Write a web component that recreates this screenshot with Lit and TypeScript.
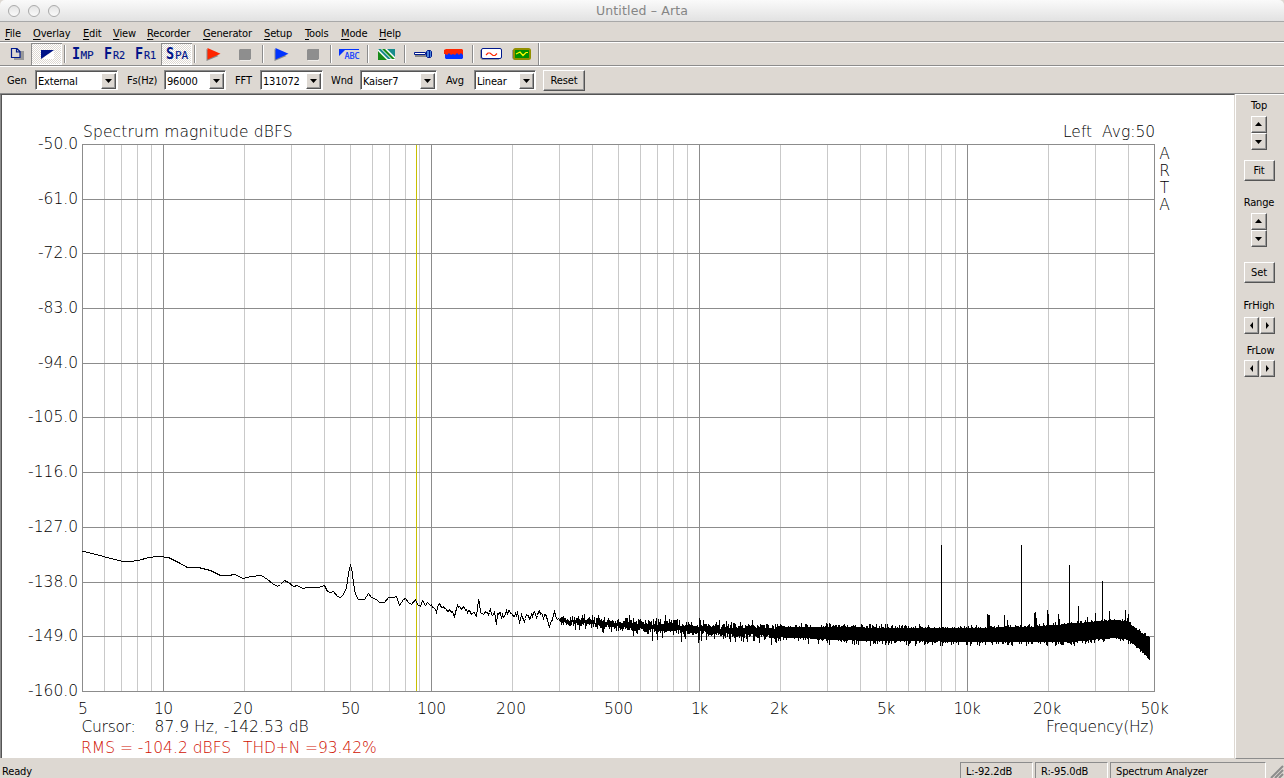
import { LitElement, html, svg, css } from "lit";
import { customElement, property } from "lit/decorators.js";

const UI_FONT = css`"DejaVu Sans Condensed", "DejaVu Sans", sans-serif`;

const bevel = css`
  .raised {
    box-sizing: border-box;
    background: #ddd8d2;
    border: 1px solid;
    border-color: #fff #555 #555 #fff;
    box-shadow: inset -1px -1px 0 #999;
    display: flex;
    align-items: center;
    justify-content: center;
  }
`;

/* ---------- Spectrum chart ---------- */

const LEFT = 82.5, RIGHT = 1154.5, TOP = 144.5, BOTTOM = 691.5;

const fx = (f: number) => Math.round(163 + 268 * Math.log10(f / 10)) + 0.5;

const minorFreqs: number[] = [];
for (const d of [1, 10, 100, 1000, 10000]) {
  for (let k = 2; k < 10; k++) {
    const f = k * d;
    if (f > 5 && f < 50000) minorFreqs.push(f);
  }
}
const majorFreqs = [10, 100, 1000, 10000];

const yTicks: [string, number][] = [
  ["-50.0", 144.5], ["-61.0", 199.5], ["-72.0", 253.5], ["-83.0", 308.5],
  ["-94.0", 363.5], ["-105.0", 417.5], ["-116.0", 472.5], ["-127.0", 527.5],
  ["-138.0", 582.5], ["-149.0", 636.5], ["-160.0", 691.5],
];

const xTicks: [string, number, number][] = [
  ["5", 82.5, 9], ["10", 163.5, 19], ["20", 243, 20], ["50", 350.5, 19],
  ["100", 431.5, 29], ["200", 511, 30], ["500", 618.5, 29], ["1k", 699.5, 17],
  ["2k", 779, 18], ["5k", 886, 18], ["10k", 967, 27], ["20k", 1047, 28], ["50k", 1154.5, 28],
];

const baseTrace: [number, number][] = (
  "82,551 88,552 103,556 114,559 123,561 130,561 138,560 148,557 158,556 168,557 178,562 187,567 " +
  "198,567 210,570 220,575 228,575 234,574 243,578 250,576 261,575 267,579 272,583 277,586 280,584 " +
  "284,580 288,582 293,586 297,585 302,588 307,587 318,587 324,585 327,591 330,592 333,591 337,596 340,597 " +
  "343,594 346,587 348,573 350,564 352,573 353,583 355,594 358,599 364,599 368,593 371,597 376,599 " +
  "379,602 384,602 388,597 393,597 396,596 399,605 403,599 405,598 408,602 411,604 415,599 417,604 " +
  "420,606 422,600 425,605 427,602 430,605 434,608 436,612 438,604 440,605 444,608 447,611 449,609 " +
  "452,611 454,616 457,605 461,609 464,607 467,612 469,610 471,614 474,612 476,616 478,600 479,602 " +
  "480,612 482,613 486,612 488,614 490,608 492,615 494,611 496,624 497,613 499,612 501,618 505,613 " +
  "508,610 511,613 514,616 517,612 519,622 521,614 524,621 527,615 530,618 533,612 536,617 538,611 " +
  "541,613 543,619 545,614 549,627 551,621 554,611 557,619 560,621"
).split(" ").map((p) => p.split(",").map(Number) as [number, number]);

function random(seed: number) {
  return () => {
    seed = (seed * 1664525 + 1013904223) >>> 0;
    return seed / 4294967296;
  };
}

function buildTrace(): string {
  const rnd = random(4711);
  const out: string[] = [];
  for (let i = 0; i < baseTrace.length; i++) {
    const [x, y] = baseTrace[i];
    out.push(`${x},${y}`);
    const next = baseTrace[i + 1];
    if (!next || x < 430) continue;
    const amp = x < 490 ? 3 : 6;
    for (let k = x + 1; k < next[0]; k++) {
      const mid = y + ((next[1] - y) * (k - x)) / (next[0] - x);
      out.push(`${k},${Math.round(mid + (rnd() - 0.5) * amp)}`);
    }
  }
  return out.join(" ");
}
const tracePoints = buildTrace();

// x, top, bottom, outward jitter
const envelope: [number, number, number, number][] = [
  [560, 619, 622, 4], [600, 621, 625, 5], [640, 623, 629, 5], [660, 624, 630, 6],
  [700, 626, 632, 6], [730, 627, 634, 6], [770, 627, 636, 5], [800, 627, 637, 4],
  [840, 627, 639, 4], [880, 628, 640, 4], [920, 628, 640, 4], [967, 628, 641, 3],
  [1030, 627, 641, 3], [1070, 624, 641, 3], [1100, 621, 638, 2], [1115, 620, 637, 2],
  [1125, 621, 638, 2], [1130, 624, 641, 2], [1140, 632, 649, 2], [1149, 638, 658, 2],
];

const spikes: [number, number][] = [
  [629, 615], [665, 615], [699, 618], [941, 545], [1021, 545], [1069, 565], [1102, 581],
  [987, 614], [988, 615], [989, 615], [1004, 615], [1007, 620], [1034, 613], [1035, 612],
  [1036, 618], [1047, 610], [1048, 614], [1058, 614], [1059, 619], [1078, 606], [1087, 617],
  [1095, 613], [1109, 611], [1125, 610], [1127, 618], [1128, 614],
];

function noisePath(): string {
  const rnd = random(90127);
  let d = "";
  let i = 0;
  for (let x = 560; x < 1150; x++) {
    while (i < envelope.length - 2 && x >= envelope[i + 1][0]) i++;
    const [x0, t0, b0, j0] = envelope[i];
    const [x1, t1, b1, j1] = envelope[i + 1];
    const k = (x - x0) / (x1 - x0);
    const j = j0 + (j1 - j0) * k;
    const wander = x < 780 ? (rnd() - 0.5) * 4 : 0;
    const top = Math.round(t0 + (t1 - t0) * k + wander - j * Math.pow(rnd(), 2.5));
    const bot = Math.round(b0 + (b1 - b0) * k + wander + j * 1.5 * Math.pow(rnd(), 4));
    d += `M${x} ${top}h1V${bot + 1}h-1z`;
  }
  for (const [x, y] of spikes) d += `M${x} ${y}h1V630h-1z`;
  return d;
}
const noise = noisePath();

@customElement("spectrum-chart")
export class SpectrumChart extends LitElement {
  static styles = css`
    :host { display: block; width: 1232px; height: 662px; background: #fff; }
    svg { display: block; }
    text { font-family: "DejaVu Sans", sans-serif; font-weight: 200; font-size: 15.5px; fill: #000; }
    .major { stroke: #8c8c8c; }
    .minor { stroke: #c9c9c9; }
    .cursor { stroke: #c8c000; }
    .rms { fill: #d01000; }
    .mid { text-anchor: middle; }
    .trace { fill: none; stroke: #000; }
    .lines { shape-rendering: crispEdges; }
  `;

  render() {
    return html`
      <svg width="1232" height="662" viewBox="2 96 1232 662">
        <g class="lines">
          ${minorFreqs.map((f) => svg`<line class="minor" x1=${fx(f)} x2=${fx(f)} y1=${TOP} y2=${BOTTOM}></line>`)}
          ${majorFreqs.map((f) => svg`<line class="major" x1=${fx(f)} x2=${fx(f)} y1=${TOP} y2=${BOTTOM}></line>`)}
          ${yTicks.map(([, y]) => svg`<line class="major" x1=${LEFT} x2=${RIGHT} y1=${y} y2=${y}></line>`)}
          <line class="major" x1=${LEFT} x2=${LEFT} y1="144" y2="692"></line>
          <line class="major" x1=${RIGHT} x2=${RIGHT} y1="144" y2="692"></line>
          <line class="cursor" x1="416.5" x2="416.5" y1="145" y2="691"></line>
          <polyline class="trace" points=${tracePoints} transform="translate(.5 .5)"></polyline>
          <path d=${noise}></path>
        </g>
        ${yTicks.map(([t, y]) => {
          const w = t.length > 5 ? 50 : 40;
          return svg`<text x=${78 - w} y=${y + 4.5} textLength=${w}>${t}</text>`;
        })}
        ${xTicks.map(([t, x, w]) => svg`<text x=${x - w / 2} y="714" textLength=${w}>${t}</text>`)}
        <text x="83" y="137" textLength="209.5">Spectrum magnitude dBFS</text>
        <text x="1063" y="137" textLength="29">Left</text>
        <text x="1102" y="137" textLength="53">Avg:50</text>
        <text class="mid" x="1164.5" y="159">A</text>
        <text class="mid" x="1164.5" y="176">R</text>
        <text class="mid" x="1164.5" y="193">T</text>
        <text class="mid" x="1164.5" y="210">A</text>
        <text x="81.500" y="732" textLength="54">Cursor:</text>
        <text x="154.500" y="732" textLength="154">87.9 Hz, -142.53 dB</text>
        <text x="1046" y="732" textLength="108">Frequency(Hz)</text>
        <text class="rms" x="81" y="753" textLength="150">RMS = -104.2 dBFS</text>
        <text class="rms" x="243" y="753" textLength="133.500">THD+N =93.42%</text>
      </svg>
    `;
  }
}

/* ---------- Drop-down ---------- */

@customElement("combo-box")
export class ComboBox extends LitElement {
  @property() value = "";
  static styles = [bevel, css`
    :host {
      box-sizing: border-box; display: flex; height: 20px; background: #fff;
      border: 1px solid; border-color: #888 #fff #fff #888;
      box-shadow: inset 1px 1px 0 #555; padding: 2px 1px 1px 2px;
      font: 11px/17px ${UI_FONT};
    }
    .value { flex: 1; letter-spacing: -0.2px; white-space: nowrap; }
    .arrow { width: 15px; height: 16px; }
    .arrow svg { display: block; }
  `];
  render() {
    return html`<span class="value">${this.value}</span>
      <span class="raised arrow"><svg width="7" height="4"><path d="M0 0h7L3.5 4z"></path></svg></span>`;
  }
}

/* ---------- Toolbar ---------- */

interface Tool { x: number; pressed?: boolean; art: unknown; }

const lettered = (x1: number, big: string, x2: number, small: string, w: number) => svg`
  <text class="big" x=${x1} y="59" textLength="8" lengthAdjust="spacingAndGlyphs">${big}</text>
  <text class="small" x=${x2} y="59" textLength=${w} lengthAdjust="spacingAndGlyphs">${small}</text>`;

const play = (x: number, color: string) => svg`
  <path fill="#8a8a8a" d="M${x - 1} 49v12l12 -5z"></path>
  <path fill=${color} d="M${x} 48v11.5l13 -5.7z"></path>`;

const stop = (x: number) => svg`
  <path fill="#fff" d="M${x + 1} 60.5h11V50h-1v9.5h-10z"></path>
  <path fill="#8e8e8e" d="M${x + 1} 49h11v10l-1 1h-11v-10z"></path>`;

const groups: Tool[][] = [
  [
    { x: 0, art: svg`
      <path fill="#999" d="M14 51h10v9h-10z"></path>
      <path fill="#ddd8d2" stroke="#001a8c" stroke-width="1.2" d="M11.500 48.500h5.500l3 3v6h-8.500z M16.500 48.500v3.500h3.500"></path>` },
    { x: 31, pressed: true, art: svg`
      <path fill="#fff" d="M54 50v9h-12z"></path>
      <path fill="#001489" d="M41 50h13L41 59z"></path>` },
  ],
  [
    { x: 68, art: lettered(72, "I", 80.5, "MP", 13) },
    { x: 99, art: lettered(104, "F", 113, "R2", 12) },
    { x: 130, art: lettered(135, "F", 144, "R1", 12) },
    { x: 161, pressed: true, art: lettered(166, "S", 175, "PA", 13) },
  ],
  [{ x: 198, art: play(207.5, "#ff2600") }, { x: 229, art: stop(239) }],
  [{ x: 266, art: play(275.5, "#0033ff") }, { x: 297, art: stop(307) }],
  [{ x: 334, art: svg`
      <path fill="#0433ff" d="M339 49h20v1h-14l-6 6z"></path>
      <text class="abc" x="344.5" y="59" textLength="15" lengthAdjust="spacingAndGlyphs">ABC</text>` }],
  [{ x: 371, art: svg`
      <path fill="#fff" d="M378 49h17v11h-17z"></path>
      <path fill="#188a18" d="M378 51v9h9z M382 49h3l10 10h-3z"></path>
      <path fill="#188c8c" d="M378 49h3l10 10h-3z M387 49h8v8z"></path>` }],
  [
    { x: 408, art: svg`
      <path fill="#888" d="M415 55h12v2h-12z"></path>
      <path fill="#fff" stroke="#00188c" d="M414.5 52.5h11v2h-11z"></path>
      <path fill="#4a83d8" stroke="#00188c" d="M426.5 51.5l1-1h3l1 1v5l-1 1h-3l-1-1z M429.5 50.5v7"></path>` },
    { x: 439, art: svg`
      <path fill="#0433ff" d="M445 50h18v8l-1 1h-16l-1-1z"></path>
      <path fill="#ff2600" d="M446 49h16l1 1v5l-2-2-2 2-2-2-2 2-2-1-2 1-2-2-2 2-2-1-1 0v-4z"></path>` },
  ],
  [
    { x: 476, art: svg`
      <path fill="#999" d="M480 50h19v10h-17l-2-2z"></path>
      <rect x="481.5" y="48.5" width="20" height="10" rx="1.5" fill="#fff" stroke="#00188c"></rect>
      <path fill="none" stroke="#ff2600" stroke-width="1.2" d="M486 55l2-2h2l3 2.5h2l2-2"></path>` },
    { x: 507, art: svg`
      <path fill="#999" d="M512 50h17v10h-15l-2-2z"></path>
      <rect x="514" y="49" width="16" height="10" rx="1.5" fill="#008f00" stroke="#929000" stroke-width="2"></rect>
      <path fill="none" stroke="#fffb00" stroke-width="1.2" d="M516 54l2-1 2-1 3 3.500 3-3 2 0"></path>` },
  ],
];

@customElement("tool-bar")
export class ToolBar extends LitElement {
  static styles = css`
    :host { display: flex; height: 22px; border-top: 1px solid #fff; border-bottom: 1px solid #8c8c8c; }
    .tool { box-sizing: border-box; width: 31px; height: 22px; }
    .tool svg { display: block; }
    .pressed {
      background: repeating-conic-gradient(#fff 0 25%, #ddd8d2 0 50%) 0 0 / 2px 2px;
      box-shadow: inset 1px 1px 0 #8c8c8c, inset -1px -1px 0 #fff;
    }
    .sep { width: 1px; margin: 2px 2px; border-left: 1px solid #8c8c8c; background: #fff; }
    .last { margin: 0; }
    .big { font: bold 15px "DejaVu Sans Mono", monospace; fill: #001489; }
    .small { font: 10.5px "DejaVu Sans Mono", monospace; fill: #001489; stroke: #001489; stroke-width: .15; }
    .abc { font: 9.5px "DejaVu Sans Mono", monospace; fill: #0433ff; stroke: #0433ff; stroke-width: .15; }
  `;
  render() {
    return groups.map((g, i) => html`
      ${g.map((t) => html`<div class="tool ${t.pressed ? "pressed" : ""}">
        <svg width="31" height="22" viewBox="${t.x} 43 31 22">${t.art}</svg></div>`)}
      <div class="sep ${i === groups.length - 1 ? "last" : ""}"></div>`);
  }
}

/* ---------- Application window ---------- */

const menus: [string, number][] = [
  ["File", 28], ["Overlay", 50], ["Edit", 30], ["View", 34], ["Recorder", 56],
  ["Generator", 61], ["Setup", 41], ["Tools", 36], ["Mode", 38], ["Help", 30],
];

const arrow = (d: string) => html`<svg width="7" height="7"><path d=${d}></path></svg>`;
const UP = "M0 5h7L3.5 1z", DOWN = "M0 2h7L3.5 6z", LT = "M5 0v7L2 3.5z", RT = "M2 0v7L5 3.5z";

@customElement("app-root")
export class AppRoot extends LitElement {
  static styles = [bevel, css`
    :host {
      display: flex; flex-direction: column; width: 1284px; height: 778px; overflow: hidden;
      background: #ddd8d2; color: #000; font: 11px/13px ${UI_FONT}; letter-spacing: -0.15px;
    }
    .title {
      position: relative; box-sizing: border-box; height: 22px; flex: none; display: flex; align-items: center;
      padding-left: 8px; gap: 8px; border-bottom: 1px solid #a8a8a8; border-radius: 5px 5px 0 0;
      background: linear-gradient(#fafafa, #e2e2e2);
    }
    .light { box-sizing: border-box; width: 12px; height: 12px; border: 1px solid #aaa; border-radius: 50%;
      background: linear-gradient(#e4e4e4, #fafafa); }
    .caption { flex: 1; text-align: center; padding-right: 68px; color: #858585;
      font: 12.5px/22px "DejaVu Sans", sans-serif; letter-spacing: 0.15px; }
    .menu { box-sizing: border-box; height: 20px; flex: none; display: flex; padding: 5px 0 0 5px; border-bottom: 1px solid #8c8c8c; }
    .menu u { text-underline-offset: 2px; text-decoration-thickness: 1px; }
    .item { flex: none; white-space: nowrap; }
    tool-bar { flex: none; }
    .params { box-sizing: border-box; height: 28px; flex: none; display: flex; align-items: center;
      border-top: 1px solid #fff; border-bottom: 1px solid #8c8c8c; padding: 0 0 0 7px; }
    .label { flex: none; }
    .body { flex: 1; display: flex; min-height: 0; }
    .view { box-sizing: border-box; width: 1235px; height: 664px; border-top: 1px solid #555; border-left: 1px solid #8c8c8c;
      border-right: 1px solid #ddd8d2; background: #fff; }
    .inner { border-left: 1px solid #555; height: 663px; padding-top: 1px; box-sizing: border-box; overflow: hidden; }
    .side { box-sizing: border-box; flex: 1; border-left: 1px solid #fff; border-top: 1px solid #fff; display: flex; flex-direction: column;
      align-items: center; padding: 4px 2px 0 0; border-bottom: 1px solid #8c8c8c; }
    .side svg { display: block; }
    .spin { width: 16px; height: 17px; margin-right: 1px; }
    .push { width: 31px; height: 21px; }
    .pair { display: flex; gap: 1px; }
    .pair .raised { width: 15px; height: 17px; }
    .reset { width: 42px; height: 21px; margin-left: 7px; }
    .status { box-sizing: border-box; height: 19px; flex: none; display: flex; padding: 2px 0 0 2px; border-top: 1px solid #ddd8d2; }
    .ready { width: 958px; flex: none; padding-top: 3px; }
    .pane { box-sizing: border-box; height: 18px; flex: none; padding: 2px 0 0 5px; margin-right: 2px; border: 1px solid; border-color: #8c8c8c #fff #fff #8c8c8c; }
    .grip { margin-left: 2px; }
  `];

  private combo(label: string, labelW: number, value: string, width: number, after: number) {
    return html`<span class="label" style="width:${labelW}px">${label}</span>
      <combo-box value=${value} style="width:${width}px;margin-right:${after}px"></combo-box>`;
  }

  render() {
    return html`
      <div class="title">
        <span class="light"></span><span class="light"></span><span class="light"></span>
        <span class="caption">Untitled – Arta</span>
      </div>
      <div class="menu">
        ${menus.map(([m, w]) => html`<span class="item" style="width:${w}px"><u>${m[0]}</u>${m.slice(1)}</span>`)}
      </div>
      <tool-bar></tool-bar>
      <div class="params">
        ${this.combo("Gen", 28, "External", 83, 9)}
        ${this.combo("Fs(Hz)", 37, "96000", 62, 9)}
        ${this.combo("FFT", 25, "131072", 63, 8)}
        ${this.combo("Wnd", 29, "Kaiser7", 77, 9)}
        ${this.combo("Avg", 28, "Linear", 62, 0)}
        <span class="raised reset">Reset</span>
      </div>
      <div class="body">
        <div class="view"><div class="inner"><spectrum-chart></spectrum-chart></div></div>
        <div class="side">
          <span>Top</span>
          <span class="raised spin" style="margin-top:4px">${arrow(UP)}</span>
          <span class="raised spin">${arrow(DOWN)}</span>
          <span class="raised push" style="margin-top:10px">Fit</span>
          <span style="margin-top:15px">Range</span>
          <span class="raised spin" style="margin-top:4px">${arrow(UP)}</span>
          <span class="raised spin">${arrow(DOWN)}</span>
          <span class="raised push" style="margin-top:15px">Set</span>
          <span style="margin-top:16px">FrHigh</span>
          <span class="pair" style="margin-top:5px"><span class="raised">${arrow(LT)}</span><span class="raised">${arrow(RT)}</span></span>
          <span style="margin-top:10px;padding-left:3px">FrLow</span>
          <span class="pair" style="margin-top:3px"><span class="raised">${arrow(LT)}</span><span class="raised">${arrow(RT)}</span></span>
        </div>
      </div>
      <div class="status">
        <span class="ready">Ready</span>
        <span class="pane" style="width:73px">L:-92.2dB</span>
        <span class="pane" style="width:73px">R:-95.0dB</span>
        <span class="pane" style="width:156px">Spectrum Analyzer</span>
        <svg class="grip" width="14" height="16"><path d="M1 16L13 4M5 16l8-8M9 16l4-4" stroke="#8c8c8c" stroke-width="2"></path></svg>
      </div>
    `;
  }
}
